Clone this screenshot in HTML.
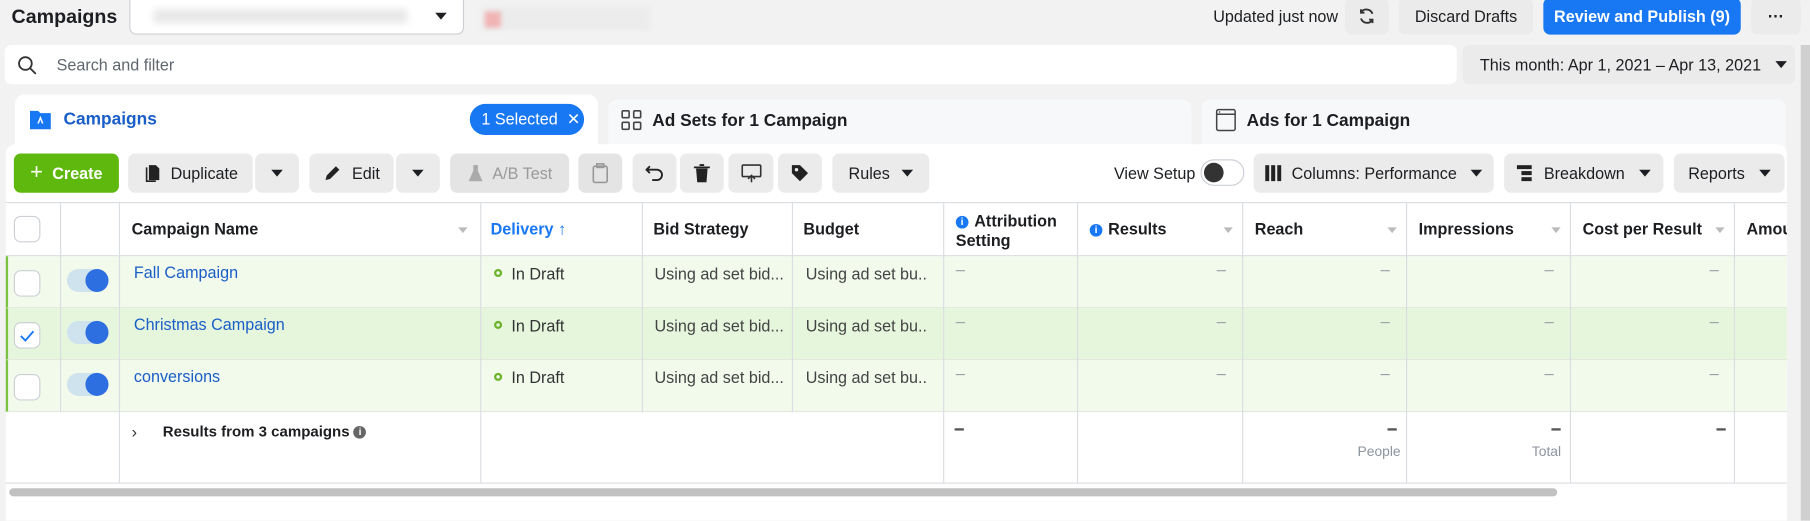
<!DOCTYPE html>
<html><head><meta charset="utf-8"><style>
*{box-sizing:border-box;margin:0;padding:0}
html,body{width:1810px;height:521px;overflow:hidden;background:#f2f2f2}
#w{position:absolute;left:0;top:0;width:1568px;height:451px;transform:scale(1.15434);transform-origin:0 0;font-family:"Liberation Sans",Arial,sans-serif;color:#1c1e21;font-size:14px}
.a{position:absolute}
.btn{position:absolute;background:#ebebeb;border-radius:6px;display:flex;align-items:center;justify-content:center;font-size:14px;color:#1c1e21}
.tri{display:inline-block;width:0;height:0;border-left:5px solid transparent;border-right:5px solid transparent;border-top:6px solid #1c1e21}
.vl{position:absolute;top:176px;height:242px;width:1px;background:#dadde1}
.row{position:absolute;left:5px;width:1543px;height:45px;background:#f2faec;border-bottom:1px solid #e4e8e0}
.cb{position:absolute;left:12px;width:23px;height:23px;border:1px solid #ccd0d5;border-radius:6px;background:#fff}
.tg{position:absolute;left:58px;width:36px;height:20px;border-radius:10px;background:#cfe3ee}
.tg:after{content:"";position:absolute;right:0;top:0;width:20px;height:20px;border-radius:50%;background:#2d6fe0}
.t{position:absolute;font-size:14px}
.dash{position:absolute;width:8px;height:1px;background:#9aa0a6}
.hd{position:absolute;top:190px;font-size:14px;font-weight:bold;color:#1c1e21}
.sa{position:absolute;top:197px;border-left:4px solid transparent;border-right:4px solid transparent;border-top:5px solid #bbb}
.ib{display:inline-block;width:11px;height:11px;border-radius:50%;background:#1877f2;color:#fff;font-size:9px;text-align:center;line-height:11px;font-weight:bold;vertical-align:1px;margin-right:5px}
</style></head><body><div id="w">
<div class="a" style="left:10px;top:5px;font-size:17px;font-weight:bold">Campaigns</div>
<div class="a" style="left:112px;top:-2px;width:290px;height:32px;background:#fff;border:1px solid #ccd0d5;border-radius:0 0 6px 6px"><div class="a" style="left:20px;top:9px;width:220px;height:12px;background:#e8e8e8;filter:blur(3px)"></div><span class="tri a" style="left:264px;top:12px"></span></div>
<div class="a" style="left:418px;top:6px;width:145px;height:20px;background:#ececec;filter:blur(2px)"><div style="width:14px;height:14px;background:#f0b4b4;margin:4px 2px"></div></div>
<div class="a" style="left:1051px;top:6px">Updated just now</div>
<div class="btn" style="left:1165px;top:-2px;width:38px;height:32px"><svg width="16" height="16" viewBox="0 0 16 16" fill="none" stroke="#333" stroke-width="1.6"><path d="M13 6A5.5 5.5 0 0 0 3 5M3 10a5.5 5.5 0 0 0 10 1"/><path d="M3 2v3h3M13 14v-3h-3"/></svg></div>
<div class="btn" style="left:1212px;top:-2px;width:116px;height:32px">Discard Drafts</div>
<div class="btn" style="left:1337px;top:-2px;width:171px;height:32px;background:#1877f2;color:#fff;font-weight:bold">Review and Publish (9)</div>
<div class="btn" style="left:1517px;top:-2px;width:43px;height:32px;font-weight:bold">···</div>
<div class="a" style="left:4px;top:39px;width:1258px;height:34px;background:#fff;border-radius:6px"><svg class="a" style="left:11px;top:9px" width="17" height="17" viewBox="0 0 17 17" fill="none" stroke="#333" stroke-width="1.6"><circle cx="7" cy="7" r="5.5"/><path d="M11 11l5 5"/></svg><span class="a" style="left:45px;top:9px;color:#606770">Search and filter</span></div>
<div class="btn" style="left:1267px;top:39px;width:288px;height:34px;justify-content:flex-start;padding-left:15px">This month: Apr 1, 2021 – Apr 13, 2021<span class="tri" style="margin-left:12px"></span></div>
<div class="a" style="left:1560px;top:39px;width:8px;height:412px;background:#d0d0d0"></div>
<div class="a" style="left:13px;top:82px;width:505px;height:50px;background:#fff;border-radius:8px 8px 0 0"></div>
<div class="a" style="left:527px;top:86px;width:505px;height:46px;background:#f7f8fa;border-radius:8px 8px 0 0"></div>
<div class="a" style="left:1041px;top:86px;width:506px;height:46px;background:#f7f8fa;border-radius:8px 8px 0 0"></div>
<svg class="a" style="left:25px;top:93px" width="20" height="20" viewBox="0 0 20 20"><path d="M1 3h7l2 2h9v14H1z" fill="#1877f2"/><path d="M8 14l2-5 2 5" stroke="#fff" stroke-width="1.3" fill="none"/></svg>
<div class="a" style="left:55px;top:95px;font-size:15px;font-weight:bold;color:#1a5ec8">Campaigns</div>
<div class="a" style="left:407px;top:90px;width:99px;height:27px;border-radius:14px;background:#1877f2;color:#fff;font-size:14px;line-height:27px;padding-left:10px">1 Selected <span style="margin-left:4px">✕</span></div>
<svg class="a" style="left:538px;top:95px" width="18" height="18" viewBox="0 0 18 18" fill="none" stroke="#444" stroke-width="1.4"><rect x="1" y="1" width="6" height="6" rx="1"/><rect x="11" y="1" width="6" height="6" rx="1"/><rect x="1" y="11" width="6" height="6" rx="1"/><rect x="11" y="11" width="6" height="6" rx="1"/></svg>
<div class="a" style="left:565px;top:96px;font-size:15px;font-weight:bold">Ad Sets for 1 Campaign</div>
<svg class="a" style="left:1052px;top:94px" width="20" height="20" viewBox="0 0 20 20" fill="none" stroke="#444" stroke-width="1.3"><rect x="2" y="1" width="16" height="18" rx="1.5"/><path d="M2 5h16M4 3h1"/></svg>
<div class="a" style="left:1080px;top:96px;font-size:15px;font-weight:bold">Ads for 1 Campaign</div>
<div class="a" style="left:5px;top:125px;width:1543px;height:326px;background:#fff;border-radius:8px 8px 0 0"></div>
<div class="btn" style="left:12px;top:133px;width:91px;height:34px;background:#5fb80e;color:#fff;font-weight:bold"><span style="font-size:19px;font-weight:normal;margin-right:8px">+</span>Create</div>
<div class="btn" style="left:111px;top:133px;width:108px;height:34px"><svg width="16" height="16" viewBox="0 0 16 16" style="margin-right:8px"><path d="M5 1h6l3 3v10H5z" fill="#222"/><path d="M3 3v12h8" stroke="#222" fill="none" stroke-width="1.4"/></svg>Duplicate</div>
<div class="btn" style="left:221px;top:133px;width:38px;height:34px"><span class="tri"></span></div>
<div class="btn" style="left:268px;top:133px;width:73px;height:34px"><svg width="16" height="16" viewBox="0 0 16 16" style="margin-right:9px"><path d="M2 14l1-4 8-8 3 3-8 8z" fill="#222"/></svg>Edit</div>
<div class="btn" style="left:343px;top:133px;width:38px;height:34px"><span class="tri"></span></div>
<div class="btn" style="left:390px;top:133px;width:103px;height:34px;background:#e4e4e4;color:#9a9a9a"><svg width="14" height="16" viewBox="0 0 14 16" style="margin-right:8px"><path d="M5 1h4v5l4 9H1l4-9z" fill="#aaa"/></svg>A/B Test</div>
<div class="btn" style="left:501px;top:133px;width:38px;height:34px;background:#e4e4e4"><svg width="14" height="18" viewBox="0 0 14 18" fill="none" stroke="#999" stroke-width="1.4"><rect x="1" y="3" width="12" height="14" rx="1.5"/><rect x="4" y="1" width="6" height="3"/></svg></div>
<div class="btn" style="left:548px;top:133px;width:38px;height:34px"><svg width="16" height="16" viewBox="0 0 16 16" fill="none" stroke="#222" stroke-width="1.6"><path d="M4 2L1 5l3 3M1 5h9a4 4 0 0 1 0 9H6"/></svg></div>
<div class="btn" style="left:589px;top:133px;width:38px;height:34px"><svg width="14" height="16" viewBox="0 0 14 16"><path d="M0 3h14M5 1h4" stroke="#222" stroke-width="1.6"/><path d="M2 4h10l-1 12H3z" fill="#222"/></svg></div>
<div class="btn" style="left:631px;top:133px;width:39px;height:34px"><svg width="18" height="16" viewBox="0 0 18 16" fill="none" stroke="#333" stroke-width="1.4"><rect x="1" y="1" width="16" height="10" rx="1"/><path d="M6 13l3-3 3 3M9 10v6"/></svg></div>
<div class="btn" style="left:674px;top:133px;width:38px;height:34px"><svg width="16" height="16" viewBox="0 0 16 16"><path d="M1 1h7l7 7-7 7-7-7z" fill="#222"/><circle cx="5" cy="5" r="1.5" fill="#ebebeb"/></svg></div>
<div class="btn" style="left:721px;top:133px;width:84px;height:34px">Rules<span class="tri" style="margin-left:10px"></span></div>
<div class="a" style="left:965px;top:142px">View Setup</div>
<div class="a" style="left:1040px;top:138px;width:38px;height:23px;border:1px solid #ccd0d5;border-radius:12px;background:#fff"><div style="position:absolute;left:2px;top:2px;width:17px;height:17px;border-radius:50%;background:#333"></div></div>
<div class="btn" style="left:1086px;top:133px;width:208px;height:34px"><svg width="14" height="14" viewBox="0 0 14 14" style="margin-right:9px"><rect x="0" y="0" width="3.5" height="14" fill="#222"/><rect x="5.2" y="0" width="3.5" height="14" fill="#222"/><rect x="10.5" y="0" width="3.5" height="14" fill="#222"/></svg>Columns: Performance<span class="tri" style="margin-left:12px"></span></div>
<div class="btn" style="left:1303px;top:133px;width:138px;height:34px"><svg width="13" height="14" viewBox="0 0 13 14" style="margin-right:10px"><rect x="0" y="0" width="13" height="3.5" fill="#222"/><rect x="4" y="5.2" width="9" height="3.5" fill="#222"/><rect x="4" y="10.5" width="9" height="3.5" fill="#222"/></svg>Breakdown<span class="tri" style="margin-left:12px"></span></div>
<div class="btn" style="left:1450px;top:133px;width:96px;height:34px">Reports<span class="tri" style="margin-left:12px"></span></div>
<div class="a" style="left:5px;top:175px;width:1543px;height:1px;background:#dadde1"></div>
<div class="a" style="left:5px;top:221px;width:1543px;height:1px;background:#dadde1"></div>
<div class="cb" style="top:187px"></div>
<div class="hd" style="left:114px">Campaign Name</div><div class="sa" style="left:397px"></div>
<div class="hd" style="left:425px;color:#1877f2">Delivery ↑</div>
<div class="hd" style="left:566px">Bid Strategy</div>
<div class="hd" style="left:696px">Budget</div>
<div class="hd" style="left:828px;top:183px;line-height:17px"><span class="ib">i</span>Attribution<br>Setting</div>
<div class="hd" style="left:944px"><span class="ib">i</span>Results</div><div class="sa" style="left:1060px"></div>
<div class="hd" style="left:1087px">Reach</div><div class="sa" style="left:1202px"></div>
<div class="hd" style="left:1229px">Impressions</div><div class="sa" style="left:1344px"></div>
<div class="hd" style="left:1371px">Cost per Result</div><div class="sa" style="left:1486px"></div>
<div class="hd" style="left:1513px;width:35px;overflow:hidden;white-space:nowrap">Amount</div>
<div class="row" style="top:222px;border-left:2px solid #7cc242"></div>
<div class="row" style="top:267px;background:#e6f6dd;border-left:2px solid #7cc242"></div>
<div class="row" style="top:312px;border-left:2px solid #7cc242"></div>
<div class="cb" style="top:234px"></div><div class="tg" style="top:233px"></div>
<div class="cb" style="top:279px"><svg width="21" height="21" viewBox="0 0 21 21"><path d="M5 11l4 4 7-8" stroke="#1877f2" stroke-width="1.6" fill="none"/></svg></div><div class="tg" style="top:278px"></div>
<div class="cb" style="top:324px"></div><div class="tg" style="top:323px"></div>
<div class="t" style="left:116px;top:228px;color:#1a5ec8">Fall Campaign</div>
<div class="t" style="left:116px;top:273px;color:#1a5ec8">Christmas Campaign</div>
<div class="t" style="left:116px;top:318px;color:#1a5ec8">conversions</div>
<div id="rows"></div>
<div class="a" style="left:5px;top:418px;width:1543px;height:1px;background:#dadde1"></div>
<div class="t" style="left:114px;top:366px;color:#333">›</div>
<div class="t" style="left:141px;top:366px;font-weight:bold;font-size:13px">Results from 3 campaigns <span class="ib" style="background:#666;margin:0">i</span></div>
<div class="dash" style="left:827px;top:371px;height:2px;background:#555"></div>
<div class="dash" style="left:1202px;top:371px;height:2px;background:#555"></div>
<div class="dash" style="left:1344px;top:371px;height:2px;background:#555"></div>
<div class="dash" style="left:1487px;top:371px;height:2px;background:#555"></div>
<div class="t" style="left:1176px;top:384px;font-size:12px;color:#8d949e">People</div>
<div class="t" style="left:1327px;top:384px;font-size:12px;color:#8d949e">Total</div>
<div class="vl" style="left:52px;height:181px"></div>
<div class="vl" style="left:103px"></div><div class="vl" style="left:416px"></div>
<div class="vl" style="left:556px;height:181px"></div><div class="vl" style="left:686px;height:181px"></div>
<div class="vl" style="left:817px"></div><div class="vl" style="left:933px"></div><div class="vl" style="left:1076px"></div>
<div class="vl" style="left:1218px"></div><div class="vl" style="left:1360px"></div><div class="vl" style="left:1502px"></div>
<div class="a" style="left:8px;top:423px;width:1341px;height:7px;border-radius:4px;background:#c1c1c1"></div>
<script>
var h='';[222,267,312].forEach(function(y){
h+='<div class="a" style="left:428px;top:'+(y+11)+'px;width:7px;height:7px;border:2px solid #6cb32c;border-radius:50%"></div>';
h+='<div class="t" style="left:443px;top:'+(y+7)+'px;color:#333">In Draft</div>';
h+='<div class="t" style="left:567px;top:'+(y+7)+'px;color:#444">Using ad set bid...</div>';
h+='<div class="t" style="left:698px;top:'+(y+7)+'px;color:#444;width:104px;overflow:hidden;white-space:nowrap">Using ad set bu...</div>';
[828,1054,1196,1338,1481].forEach(function(x){h+='<div class="dash" style="left:'+x+'px;top:'+(y+12)+'px"></div>';});
});document.getElementById('rows').innerHTML=h;
</script>
</div></body></html>
